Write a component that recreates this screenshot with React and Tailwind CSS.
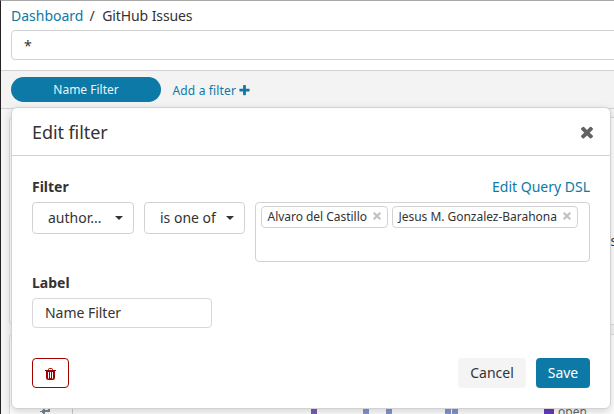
const PLUS =
  "M1600 736v192q0 40-28 68t-68 28h-416v416q0 40-28 68t-68 28h-192q-40 0-68-28t-28-68v-416h-416q-40 0-68-28t-28-68v-192q0-40 28-68t68-28h416v-416q0-40 28-68t68-28h192q40 0 68 28t28 68v416h416q40 0 68 28t28 68z";
const TIMES =
  "M1490 1322q0 40-28 68l-136 136q-28 28-68 28t-68-28l-294-294-294 294q-28 28-68 28t-68-28l-136-136q-28-28-28-68t28-68l294-294-294-294q-28-28-28-68t28-68l136-136q28-28 68-28t68 28l294 294 294-294q28-28 68-28t68 28l136 136q28 28 28 68t-28 68l-294 294 294 294q28 28 28 68z";

function Icon({ d, className }) {
  return (
    <svg viewBox="0 0 1792 1792" fill="currentColor" className={className} aria-hidden="true">
      <path d={d} />
    </svg>
  );
}

function TrashIcon() {
  return (
    <svg viewBox="0 0 11 12" fill="none" stroke="currentColor" className="h-3 w-[11px]" aria-hidden="true">
      <path d="M0 2.5h11M3.5 2.5V1.5q0-1 1-1h2q1 0 1 1v1" />
      <path d="M1.5 2.5v8q0 1 1 1h6q1 0 1-1v-8M3.5 10.5h4M2.5 3.5h6M2.5 3v8M8.5 3v8M4.5 4v6.5M6.5 4v6.5" />
    </svg>
  );
}

function Select({ label, className }) {
  return (
    <button className={`flex h-8 items-center justify-between rounded border border-[#d2d2d2] bg-white pr-[10px] pl-[15px] ${className}`}>
      <span>{label}</span>
      <svg viewBox="0 0 8 4" className="h-1 w-2" fill="currentColor">
        <path d="M0 0h8L4 4z" />
      </svg>
    </button>
  );
}

function Tag({ name, className }) {
  return (
    <span className={`flex h-[22px] items-center justify-between rounded border border-[#d2d2d2] pr-[6px] pl-[5.5px] text-[12px] whitespace-nowrap ${className}`}>
      <span className="leading-5 tracking-[-0.03px]">{name}</span>
      <svg viewBox="0 0 8 8" className="mb-[3px] size-2 text-[#bfbfbf]" stroke="currentColor" strokeWidth="2">
        <path d="M.7.7l6.6 6.6M7.3.7L.7 7.3" />
      </svg>
    </span>
  );
}

function EditFilter() {
  return (
    <section className="absolute top-[106px] left-[10px] flex h-[302px] w-[600px] flex-col rounded-md border border-[#d2d2d2] bg-white text-[14px] leading-5 shadow-[0_3px_8px_rgba(0,0,0,0.17)]">
      <header className="flex h-[48px] shrink-0 items-center justify-between border-b border-[#d2d2d2] pr-[14px] pl-5">
        <h2 className="text-[18px] leading-6 tracking-[-0.08px]">Edit filter</h2>
        <Icon d={TIMES} className="size-[18px] text-[#626262]" />
      </header>
      <div className="flex grow flex-col px-5">
        <div className="mt-[21px] flex justify-between">
          <strong className="font-bold">Filter</strong>
          <a className="text-[#0d79a6]">Edit Query DSL</a>
        </div>
        <div className="mt-[5px] flex gap-[10px]">
          <Select label="author..." className="w-[102px]" />
          <Select label="is one of" className="w-[101px]" />
          <div className="flex h-[60px] w-[335px] items-start gap-1 rounded border border-[#d2d2d2] px-[5px] pt-[3px]">
            <Tag name="Alvaro del Castillo" className="w-[127px]" />
            <Tag name="Jesus M. Gonzalez-Barahona" className="w-[186px]" />
          </div>
        </div>
        <strong className="mt-[11px] font-bold">Label</strong>
        <div className="mt-[5px] flex h-[30px] w-[180px] items-center rounded border border-[#d8d8d8] px-3 tracking-[-0.03px]">Name Filter</div>
        <footer className="mt-[30px] flex items-center">
          <button className="flex h-[30px] w-[37px] items-center justify-center rounded border border-[#a30000] pt-[2px] text-[#a30000]">
            <TrashIcon />
          </button>
          <button className="ml-auto h-[30px] w-[68px] rounded bg-[#f4f4f4]">Cancel</button>
          <button className="ml-[10px] h-[30px] w-[54px] rounded bg-[#0d79a6] text-white">Save</button>
        </footer>
      </div>
    </section>
  );
}

export default function App() {
  return (
    <main className="relative flex h-[414px] w-[614px] flex-col overflow-hidden border-t border-l border-t-[#aaa] border-l-[#222] bg-[#f5f5f5] font-['Noto_Sans','Open_Sans',sans-serif] text-[#333]">
      <div className="h-[69px] shrink-0 bg-white pl-[10px]">
        <nav className="flex h-[29px] items-center text-[14px] leading-5">
          <a className="text-[#0d79a6]">Dashboard</a>
          <span className="mr-[7.5px] ml-[6px]">/</span>
          <span className="tracking-[-0.1px]">GitHub Issues</span>
        </nav>
        <div className="flex h-[30px] w-[620px] items-center rounded border border-[#d2d2d2] pl-3 text-[14px]">*</div>
      </div>
      <div className="flex h-[39px] shrink-0 items-start border-y border-[#d2d2d2] bg-[#f3f3f3] pt-[6px] pl-[10px] text-[12px] leading-5">
        <button className="h-[25px] w-[150px] rounded-full bg-[#0d79a6] text-[#eaf5f9]">Name Filter</button>
        <a className="mt-1 ml-[11.5px] flex items-center gap-[2px] text-[#0d79a6]">
          <span className="tracking-[0.15px]">Add a filter</span> <Icon d={PLUS} className="mb-[2px] size-[13px]" />
        </a>
      </div>
      <div className="flex grow flex-col gap-[9px] pt-[8px] pl-2">
        <div className="flex h-[208px] w-[620px] shrink-0 items-center rounded border border-[#dadada] bg-white pt-[39px] pl-[600.5px] text-[14px]">
          s
        </div>
        <div className="flex h-[90px] w-[620px] shrink-0 items-end rounded-t border border-[#dadada] bg-white">
          <svg viewBox="0 0 604 20" className="mb-[2px] h-5 w-[604px] shrink-0" shapeRendering="crispEdges">
            <path d="M62.5 0V20" stroke="#ccc" />
            <path d="M33 10.5h6V8M31 10.5l3-2v4z" stroke="#789" fill="#789" />
            <path d="M301 5h6v15h-6z" fill="#7b5cb8" />
            <path d="M353 5h6v15h-6zM376 5h6v15h-6zM435 5h6v15h-6zM442 5h6v15h-6z" fill="#8495d4" />
            <rect x="534" y="7" width="10" height="10" rx="2" fill="#663db8" />
            <text x="548" y="15" fontSize="12" fill="#666">open</text>
          </svg>
        </div>
      </div>
      <EditFilter />
    </main>
  );
}
